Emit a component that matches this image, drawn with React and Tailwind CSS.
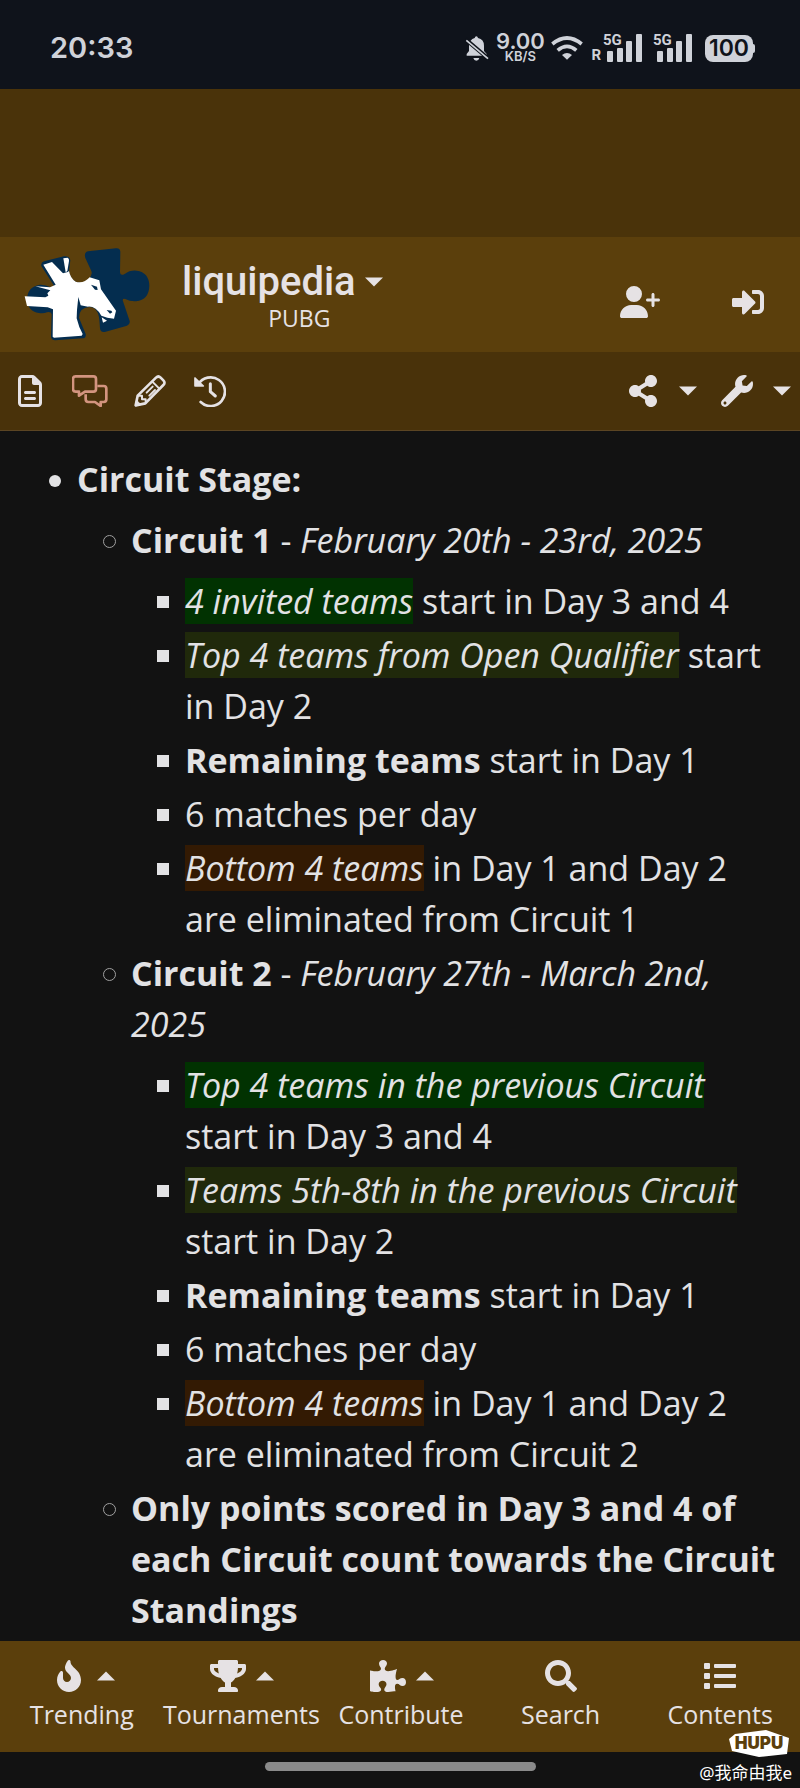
import React from 'react';
import { FaPuzzlePiece, FaSearch, FaFire, FaTrophy, FaList, FaShareAlt, FaWrench, FaSignInAlt } from 'react-icons/fa';
import { FaUserPlus, FaRegFileLines } from 'react-icons/fa6';

const circuits = [
  {
    name: 'Circuit 1',
    dates: 'February 20th - 23rd, 2025',
    rules: [
      { tag: '4 invited teams', tone: 'bg-[#013201]', text: ' start in Day 3 and 4' },
      { tag: 'Top 4 teams from Open Qualifier', tone: 'bg-[#20290b]', text: ' start in Day 2' },
      { bold: 'Remaining teams', text: ' start in Day 1' },
      { text: '6 matches per day' },
      { tag: 'Bottom 4 teams', tone: 'bg-[#331a03]', text: ' in Day 1 and Day 2 are eliminated from Circuit 1' },
    ],
  },
  {
    name: 'Circuit 2',
    dates: 'February 27th - March 2nd, 2025',
    rules: [
      { tag: 'Top 4 teams in the previous Circuit', tone: 'bg-[#013201]', text: ' start in Day 3 and 4' },
      { tag: 'Teams 5th-8th in the previous Circuit', tone: 'bg-[#20290b]', text: ' start in Day 2' },
      { bold: 'Remaining teams', text: ' start in Day 1' },
      { text: '6 matches per day' },
      { tag: 'Bottom 4 teams', tone: 'bg-[#331a03]', text: ' in Day 1 and Day 2 are eliminated from Circuit 2' },
    ],
  },
];

const tabs = [
  { label: 'Trending', Icon: FaFire, menu: true },
  { label: 'Tournaments', Icon: FaTrophy, menu: true },
  { label: 'Contribute', Icon: FaPuzzlePiece, menu: true },
  { label: 'Search', Icon: FaSearch },
  { label: 'Contents', Icon: FaList },
];

// list bullets, drawn in the gutter left of each item
const disc =
  "relative mb-[3px] before:absolute before:-left-[28px] before:top-[21px] before:size-[12px] before:rounded-full before:bg-[#e2e2e4] before:content-['']";
const circle =
  "relative mb-[3px] before:absolute before:-left-[28px] before:top-[20px] before:size-[13px] before:rounded-full before:border before:border-[#a0a0a0] before:content-['']";
const square =
  "relative mb-[3px] before:absolute before:-left-[28px] before:top-[20px] before:size-[12px] before:bg-[#e2e2e4] before:content-['']";

function Caret({ up }) {
  return (
    <svg width="18" height="10" viewBox="0 0 18 10" fill="currentColor" aria-hidden="true">
      <path d={up ? 'M0 9.5 9 .5l9 9z' : 'M0 .5h18L9 9.5z'} />
    </svg>
  );
}

function Signal() {
  return (
    <div className="relative">
      <span className="absolute -left-[4px] -top-[1px] font-['Roboto',sans-serif] text-[15px] leading-[14px] font-bold">5G</span>
      <svg width="36" height="28" viewBox="0 0 36 28" fill="currentColor" aria-hidden="true">
        <rect x="0" y="17" width="6" height="11" rx="1" />
        <rect x="10" y="14" width="6" height="14" rx="1" />
        <rect x="19" y="7" width="6" height="21" rx="1" />
        <rect x="29" y="0" width="6" height="28" rx="1" />
      </svg>
    </div>
  );
}

function MutedBell() {
  return (
    <svg width="24" height="25" viewBox="0 0 72 75" fill="currentColor" aria-hidden="true">
      <path d="M34 1q4 0 5 5 18 4 18 23v16l8 9v5H5v-5l7-9V29Q13 11 29 6q1-5 5-5z" />
      <path d="M25 66h18q-2 8-9 8t-9-8z" />
      <path d="M2 10 68 66" stroke="#0f131b" strokeWidth="12" />
      <path d="M4 13 69 68" stroke="currentColor" strokeWidth="5" />
    </svg>
  );
}

function Wifi() {
  return (
    <svg width="32" height="24" viewBox="0 0 96 72" fill="none" stroke="currentColor" strokeWidth="11" aria-hidden="true">
      <path d="M4 24q44-36 88 0" />
      <path d="M20 43q28-24 56 0" />
      <path d="M48 71 33 57q15-12 30 0z" fill="currentColor" stroke="none" />
    </svg>
  );
}

function StatusBar() {
  return (
    <div className="flex h-[89px] items-center justify-between bg-[#0f131b] pl-[50px] pr-[45px] pt-[7px] font-['Inter',sans-serif] text-[#cfd2d9]">
      <span className="text-[29px] font-semibold">20:33</span>
      <div className="flex items-center gap-[6px]">
        <MutedBell />
        <div className="flex w-[50px] flex-col items-center font-semibold">
          <span className="text-[22px] leading-[17px]">9.00</span>
          <span className="text-[13px] leading-[13px]">KB/S</span>
        </div>
        <Wifi />
        <div className="flex items-end gap-[6px] pl-[2px]">
          <span className="font-['Roboto',sans-serif] text-[15px] leading-[14px] font-bold">R</span>
          <Signal />
        </div>
        <div className="pl-[8px]">
          <Signal />
        </div>
        <div className="flex items-center pl-[6px]">
          <span className="flex h-[27px] w-[48px] items-center justify-center rounded-[8px] bg-[#cfd2d9] text-[23px] font-semibold text-[#0f131b]">100</span>
          <span className="h-[9px] w-[2px] rounded-r bg-[#cfd2d9]" />
        </div>
      </div>
    </div>
  );
}

function Logo() {
  return (
    <svg width="144" height="109" viewBox="4 2 432 327" aria-hidden="true">
      <path
        fill="#042d4f"
        d="M88 66 148 51q17-1 19 12l-4 32q2 22 20 32 22 9 38-7 15-14 8-27l-17-37q-5-16 8-20l84-9q12-1 13 10l-1 62q1 12 14 5 16-12 36-10 37 5 38 45-1 42-40 47-18 1-32-7-10-3-7 7l20 59q2 10-8 14l-64 18q-16 4-17-10l-2-26q-4-38-30-38-31 2-31 32l20 49q2 12-9 13l-82 6q-13 0-13-12l2-66q-2-9-14-6-10 4-24 2-35-6-36-43 2-36 38-42 18-1 32 8 10 3 10-6L80 80q-2-11 8-14z"
      />
      <path
        fill="#fff"
        d="m86 76 26-8 33 34 14-4 4-3q4 22 20 32 24 7 42-13l29 9 5 27 45 64-6 24-20-3-18-6q-17-29-40-27l-22-4-7-25-4 39-1 25q6 26 18 47l-3 5-83 6-4-3 1-82-16-6-62-4-7-29 62 3 9-5-3-7 9-9-45-12 44 3 17-8z"
      />
      <path fill="#fff" d="m146 57 13-2q5 2 4 10l-5 30-5 4z" />
      <path fill="#042d4f" d="M229 136l18 6 2 10-8-1zM276 212l14 2 3 5-7 4z" />
      <path fill="#fff" d="m261 234 16 10-12 6z" />
    </svg>
  );
}

function TalkIcon() {
  return (
    <svg width="36" height="32" viewBox="187 28 108 96" fill="none" stroke="currentColor" strokeWidth="8" strokeLinejoin="round" aria-hidden="true">
      <path d="M198 32h53q8 0 8 8v30q0 8-8 8h-25l-18 12V78h-10q-8 0-8-8V40q0-8 8-8z" />
      <path d="M263 61h19q8 0 8 8v32q0 8-8 8h-9v12l-17-12h-20q-8 0-8-8V86" />
    </svg>
  );
}

function PencilIcon() {
  return (
    <svg width="32" height="32" viewBox="0 0 96 96" fill="none" stroke="currentColor" strokeWidth="8" strokeLinejoin="round" strokeLinecap="round" aria-hidden="true">
      <path d="M5 91 11 62 66 8q7-7 14 0l8 8q7 7 0 14L34 85z" />
      <path d="M55 20 76 41M38 53 56 35M46 62 63 45M13 62h11v11h11v10" strokeWidth="6" />
      <path d="M4 92 8 76l12 12z" fill="currentColor" strokeWidth="2" />
    </svg>
  );
}

function HistoryIcon() {
  return (
    <svg width="32" height="32" viewBox="0 0 96 96" fill="none" stroke="currentColor" strokeWidth="8" strokeLinecap="round" strokeLinejoin="round" aria-hidden="true">
      <path d="M13 28A43 43 0 1 1 20 81" />
      <path d="M49 26v24l15 13" strokeWidth="9" />
      <path d="M3 9v24h25z" fill="currentColor" strokeWidth="5" />
    </svg>
  );
}

function Header() {
  return (
    <header className="flex h-[115px] items-center bg-[#5b3f0c] text-[#e6e2e4]">
      <a href="#home" aria-label="Liquipedia home" className="pl-4">
        <Logo />
      </a>
      <button className="ml-[22px] flex flex-col items-start pt-[2px]">
        <span className="flex items-center gap-[9px] font-['Roboto',sans-serif] text-[40px] leading-[44px] font-medium">
          liquipedia <Caret />
        </span>
        <span className="self-center pl-[34px] text-[23px] leading-[28px]">PUBG</span>
      </button>
      <div className="ml-auto flex items-center gap-[72px] pr-[36px] pt-[14px]">
        <button aria-label="Create account"><FaUserPlus size={40} /></button>
        <button aria-label="Log in"><FaSignInAlt size={32} /></button>
      </div>
    </header>
  );
}

function Toolbar() {
  return (
    <div className="flex h-[79px] items-center justify-between border-b border-[#5b4523] bg-[#49320a] pr-[9px] text-[#e6e2e4]">
      <div className="flex items-center">
        <button aria-label="Page" className="flex w-[60px] justify-center"><FaRegFileLines size={32} /></button>
        <button aria-label="Discussion" className="flex w-[60px] justify-center text-[#d3947f]"><TalkIcon /></button>
        <button aria-label="Edit" className="flex w-[60px] justify-center"><PencilIcon /></button>
        <button aria-label="History" className="flex w-[60px] justify-center"><HistoryIcon /></button>
      </div>
      <div className="flex items-center gap-[24px]">
        <button aria-label="Share" className="flex items-center gap-[20px]"><FaShareAlt size={32} /><Caret /></button>
        <button aria-label="Tools" className="flex items-center gap-[20px]"><FaWrench size={32} /><Caret /></button>
      </div>
    </div>
  );
}

function Rule({ rule }) {
  return (
    <li className={square}>
      {rule.tag && <i className={rule.tone}>{rule.tag}</i>}
      {rule.bold && <b>{rule.bold}</b>}
      {rule.text}
    </li>
  );
}

function Watermark() {
  return (
    <div className="absolute right-[8px] bottom-[3px] flex flex-col items-end text-white">
      <div className="relative mr-[3px] h-[27px] w-[60px]">
        <svg className="absolute inset-0" width="60" height="27" viewBox="0 0 60 27" fill="#fff" aria-hidden="true">
          <path d="M6 4 37 0l23 8-2 16-28 3-27-6L0 9z" />
        </svg>
        <span className="relative block text-center font-['Inter',sans-serif] text-[17px] leading-[26px] font-black text-[#5b3f0c]">HUPU</span>
      </div>
      <span className="mt-[4px] font-['Noto_Sans','Noto_Sans_CJK_SC',sans-serif] text-[17px] leading-[24px]">@我命由我e</span>
    </div>
  );
}

export default function App() {
  return (
    <div className="flex min-h-screen flex-col bg-[#121212] font-['Open_Sans',sans-serif] text-[#e2e2e4]">
      <StatusBar />
      <div className="h-[148px] bg-[#4a330a]" />
      <Header />
      <Toolbar />

      <main className="flex-1 px-[23px] pt-[23px] text-[34px] leading-[51px]">
        <ul className="pl-[54px]">
          <li className={disc}>
            <b>Circuit Stage:</b>
            <ul className="mt-[10px] pl-[54px]">
              {circuits.map((c) => (
                <li key={c.name} className={circle}>
                  <b>{c.name}</b> - <i>{c.dates}</i>
                  <ul className="mt-[10px] pl-[54px]">
                    {c.rules.map((rule, i) => (
                      <Rule key={i} rule={rule} />
                    ))}
                  </ul>
                </li>
              ))}
              <li className={circle}>
                <b>Only points scored in Day 3 and 4 of each Circuit count towards the Circuit Standings</b>
              </li>
            </ul>
          </li>
        </ul>
      </main>

      <footer className="relative">
        <nav className="grid h-[111px] grid-cols-5 bg-[#5b3f0c] pl-[2px] text-[#e6e2e4]">
          {tabs.map(({ label, Icon, menu }) => (
            <button key={label} className="flex flex-col items-center pt-[19px]">
              <span className="flex items-center gap-[8px]">
                <Icon className="h-[32px] w-[40px]" />
                {menu && <Caret up />}
              </span>
              <span className="mt-[5px] text-[25px] leading-[34px]">{label}</span>
            </button>
          ))}
        </nav>
        <div className="flex h-[36px] justify-center pt-[10px]">
          <div className="h-[9px] w-[271px] rounded-full bg-[#8a8a8a]" />
        </div>
        <Watermark />
      </footer>
    </div>
  );
}
